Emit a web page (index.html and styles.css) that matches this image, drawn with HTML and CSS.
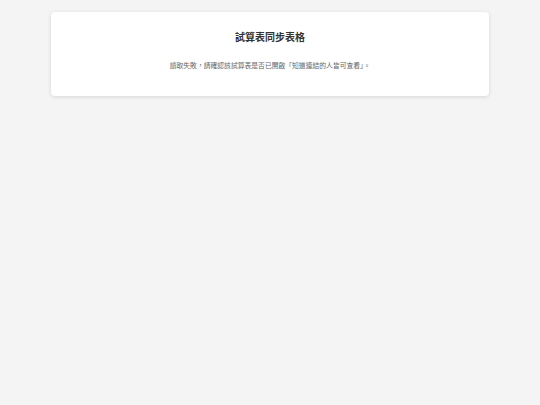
FILE: index.html
```html
<!DOCTYPE html>
<html lang="zh-Hant-TW">
<head>
<meta charset="utf-8">
<link rel="stylesheet" href="styles.css">
</head>
<body>
<div class="card">
  <h1 class="title">試算表同步表格</h1>
  <p class="message">讀取失敗，請確認該試算表是否已開啟「知道連結的人皆可查看」。</p>
</div>
</body>
</html>
```
FILE: styles.css
```css
html, body {
  margin: 0;
  padding: 0;
  background: #f4f4f4;
}
body {
  padding: 12px 51px;
  font-family: "Noto Sans CJK TC", "Noto Sans CJK SC", sans-serif;
}
.card {
  background: #ffffff;
  border-radius: 4px;
  box-shadow: 0 1px 4px rgba(0, 0, 0, 0.12);
  padding: 18px 20px 25px;
  text-align: center;
}
.title {
  margin: 0;
  font-size: 10px;
  line-height: 14px;
  font-weight: 700;
  color: #333333;
}
.message {
  margin: 15px 0 0;
  font-size: 6.8px;
  line-height: 12px;
  color: #666666;
  font-feature-settings: "locl" 1;
}
```
